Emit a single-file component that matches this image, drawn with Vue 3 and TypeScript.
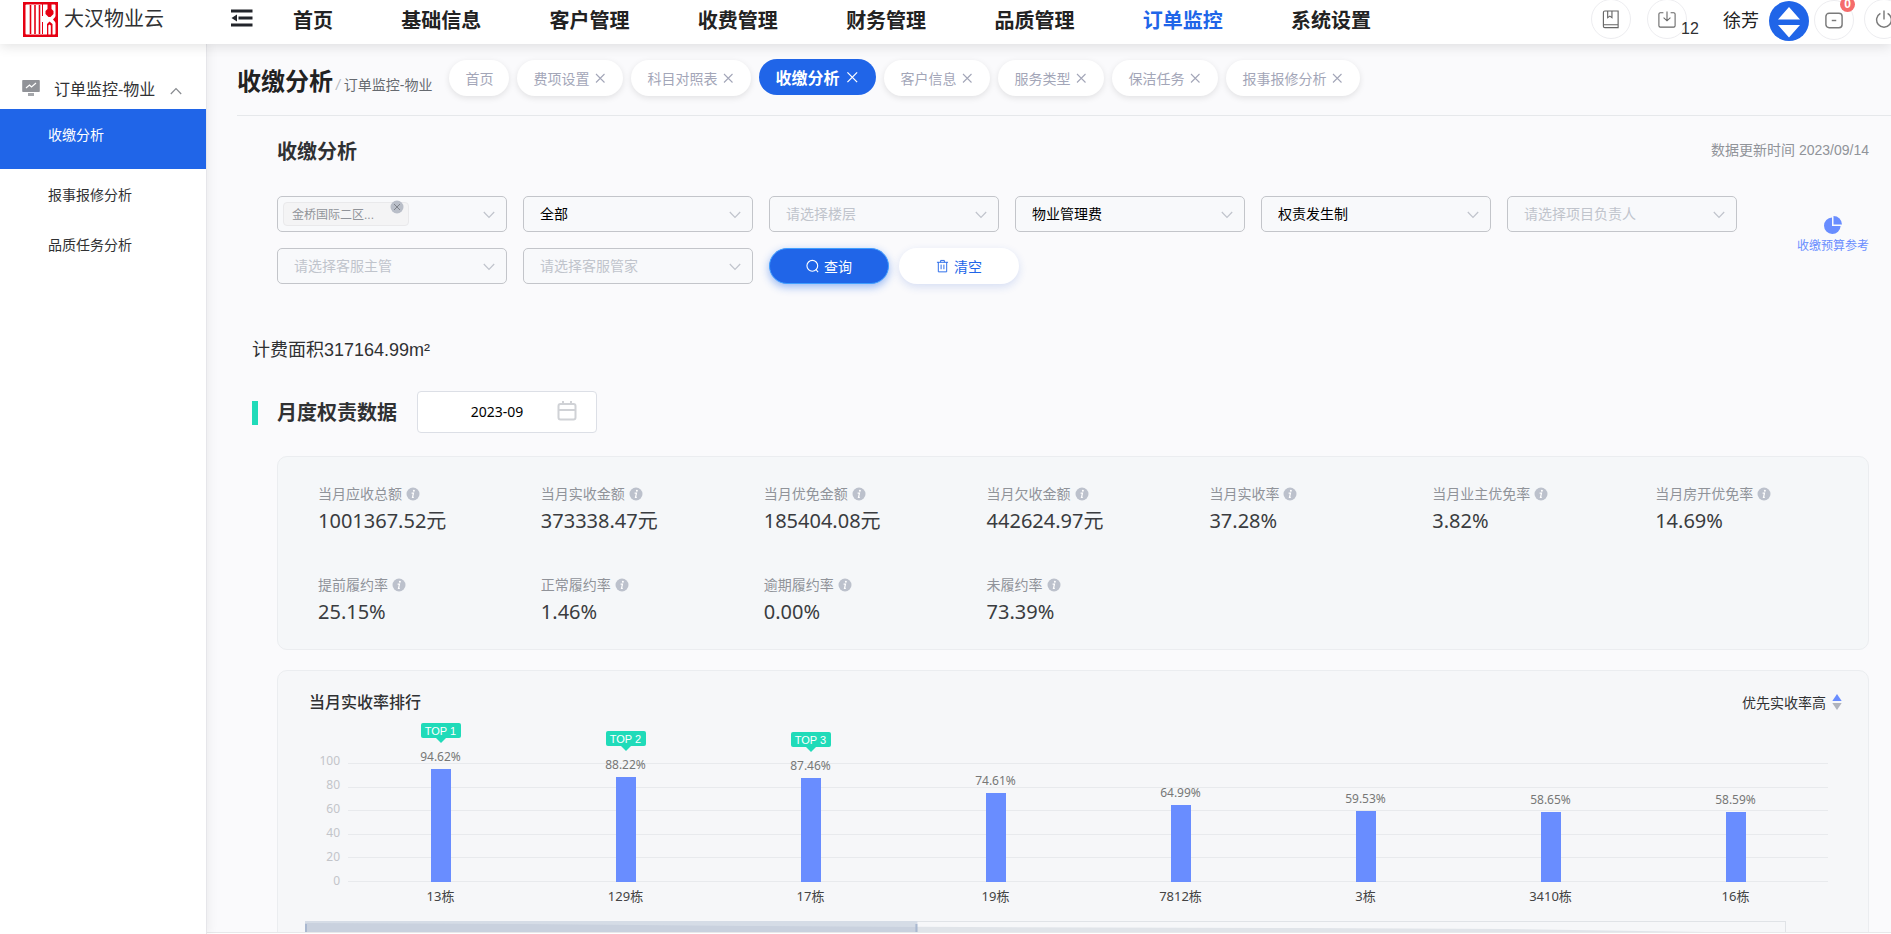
<script setup lang="ts">
import { ref } from 'vue'

interface Tab { label: string; closable: boolean; active?: boolean }
interface Filter { id: string; name: string; value: string; placeholder: boolean }
interface Stat { label: string; value: string }
interface Bar { name: string; rate: number }

const navItems = ['首页', '基础信息', '客户管理', '收费管理', '财务管理', '品质管理', '订单监控', '系统设置']
const activeNav = ref('订单监控')

const menuItems = ['收缴分析', '报事报修分析', '品质任务分析']
const activeMenu = ref('收缴分析')

const tabs: Tab[] = [
  { label: '首页', closable: false },
  { label: '费项设置', closable: true },
  { label: '科目对照表', closable: true },
  { label: '收缴分析', closable: true, active: true },
  { label: '客户信息', closable: true },
  { label: '服务类型', closable: true },
  { label: '保洁任务', closable: true },
  { label: '报事报修分析', closable: true },
]

const filters: Filter[] = [
  { id: 'scope', name: '范围', value: '全部', placeholder: false },
  { id: 'floor', name: '楼层', value: '请选择楼层', placeholder: true },
  { id: 'fee', name: '费项', value: '物业管理费', placeholder: false },
  { id: 'basis', name: '核算方式', value: '权责发生制', placeholder: false },
  { id: 'owner', name: '项目负责人', value: '请选择项目负责人', placeholder: true },
  { id: 'supervisor', name: '客服主管', value: '请选择客服主管', placeholder: true },
  { id: 'keeper', name: '客服管家', value: '请选择客服管家', placeholder: true },
]

const month = ref('2023-09')

const stats: Stat[] = [
  { label: '当月应收总额', value: '1001367.52元' },
  { label: '当月实收金额', value: '373338.47元' },
  { label: '当月优免金额', value: '185404.08元' },
  { label: '当月欠收金额', value: '442624.97元' },
  { label: '当月实收率', value: '37.28%' },
  { label: '当月业主优免率', value: '3.82%' },
  { label: '当月房开优免率', value: '14.69%' },
  { label: '提前履约率', value: '25.15%' },
  { label: '正常履约率', value: '1.46%' },
  { label: '逾期履约率', value: '0.00%' },
  { label: '未履约率', value: '73.39%' },
]

const ticks = [100, 80, 60, 40, 20, 0]
const bars: Bar[] = [
  { name: '13栋', rate: 94.62 },
  { name: '129栋', rate: 88.22 },
  { name: '17栋', rate: 87.46 },
  { name: '19栋', rate: 74.61 },
  { name: '7812栋', rate: 64.99 },
  { name: '3栋', rate: 59.53 },
  { name: '3410栋', rate: 58.65 },
  { name: '16栋', rate: 58.59 },
]
</script>

<template>
  <div class="app">
    <header class="topbar">
      <div class="brand">
        <svg class="logo" viewBox="0 0 35 35" aria-hidden="true">
          <rect width="35" height="35" fill="#e60012" />
          <rect x="2.500" y="2.500" width="30" height="30" rx="1" fill="#fff" />
          <path d="M7.500 3v29M12 3v29M16.500 3v29" stroke="#e60012" stroke-width="1.600" fill="none" />
          <path d="M24.500 2h4v5l2 2v3l-3 3h-2l-3-3V9l2-2z" fill="#e60012" />
          <path d="M19.500 2v12M19.500 20v12" stroke="#e60012" stroke-width="1" fill="none" />
          <path d="M33 14v7l-3-3.500zM24 33V22l2.500-2.500L29.500 22v11h-1.700V23.500l-1.300-1-1.200 1V33z" fill="#e60012" />
        </svg>
        <span class="brand-name">大汉物业云</span>
      </div>
      <button class="fold" type="button" aria-label="收起菜单">
        <svg viewBox="0 0 22 18" aria-hidden="true">
          <path d="M0 2h21.500M7.500 9H21.500M0 16h21.500" stroke="#22252b" stroke-width="3" fill="none" />
          <path d="M0.500 9L6 5.500v7z" fill="#22252b" />
        </svg>
      </button>
      <nav class="nav">
        <a v-for="n in navItems" :key="n" href="#" :class="{ on: n === activeNav }" @click.prevent="activeNav = n">{{ n }}</a>
      </nav>
      <div class="tools">
        <button class="round" type="button" aria-label="手册">
          <svg viewBox="0 0 18 20" fill="none" stroke="#666" stroke-width="1.200" aria-hidden="true">
            <path d="M2.500 1h14v17.500h-14a1.500 1.500 0 0 1-1.500-1.500V2.500A1.500 1.500 0 0 1 2.500 1zM1.200 15.500h15.300M5.500 1v7l2.300-1.600L10 8V1" />
          </svg>
        </button>
        <button class="round download" type="button" aria-label="下载 12">
          <svg viewBox="0 0 20 20" fill="none" stroke="#666" stroke-width="1.200" aria-hidden="true">
            <path d="M6 2.500H2.500A1.500 1.500 0 0 0 1 4v13a1.500 1.500 0 0 0 1.500 1.500h15A1.500 1.500 0 0 0 19 17V4a1.500 1.500 0 0 0-1.500-1.500H14M10 1v10.500M6.200 7.800L10 11.500l3.800-3.700" />
          </svg>
          <span class="count">12</span>
        </button>
        <span class="user">徐芳</span>
        <span class="avatar">
          <svg viewBox="0 0 40 40" aria-hidden="true">
            <path d="M20 6L31 18.500H9zM9 24h22L20 36.500z" fill="#fff" />
          </svg>
        </span>
        <button class="round message" type="button" aria-label="消息 0">
          <svg viewBox="0 0 20 18" fill="none" stroke="#7a7a7a" stroke-width="1.600" aria-hidden="true">
            <rect x="1" y="1" width="18" height="16" rx="3.500" />
            <path d="M7.500 9h5" />
          </svg>
          <span class="dot">0</span>
        </button>
        <button class="round power" type="button" aria-label="退出">
          <svg viewBox="0 0 20 20" fill="none" stroke="#7a7a7a" stroke-width="1.600" aria-hidden="true">
            <path d="M6 3.200a8.200 8.200 0 1 0 8 0M10 0v10" />
          </svg>
        </button>
      </div>
    </header>

    <div class="body">
      <aside class="side">
        <button class="group" type="button" aria-expanded="true">
          <svg class="screen" viewBox="0 0 18 16" aria-hidden="true">
            <path d="M1 0h16a.8.8 0 0 1 .8.8v10.400a.8.8 0 0 1-.8.8H1a.8.8 0 0 1-.8-.8V.8A.8.8 0 0 1 1 0z" fill="#919398" />
            <path d="M4 8l3.500-3 2 2L14 3" stroke="#fff" stroke-width="1.200" fill="none" />
            <rect x="6" y="13" width="6" height="3" fill="#a5a7ab" />
          </svg>
          <span>订单监控-物业</span>
          <svg class="caret" viewBox="0 0 12 8" aria-hidden="true">
            <path d="M.8 7L6 1.500 11.200 7" stroke="#888b90" stroke-width="1.200" fill="none" />
          </svg>
        </button>
        <a v-for="m in menuItems" :key="m" href="#" class="item" :class="{ on: m === activeMenu }" @click.prevent="activeMenu = m">{{ m }}</a>
      </aside>

      <main class="main">
        <div class="crumbs">
          <h1>收缴分析</h1>
          <span class="path"><i>/</i> 订单监控-物业</span>
          <div class="tabs">
            <button v-for="t in tabs" :key="t.label" type="button" class="tab" :class="{ on: t.active }">
              {{ t.label }}
              <svg v-if="t.closable" viewBox="0 0 14 14" aria-hidden="true">
                <path d="M3 3l8.500 8.500M11.500 3l-8.500 8.500" stroke="currentColor" stroke-width="1.100" fill="none" />
              </svg>
            </button>
          </div>
        </div>

        <div class="content">
          <div class="heading">
            <h2>收缴分析</h2>
            <span class="updated">数据更新时间 2023/09/14</span>
          </div>

          <div class="query">
            <form class="filters" @submit.prevent>
              <div class="field">
                <select aria-label="项目"><option></option></select>
                <span class="chip">金桥国际二区...
                  <button type="button" aria-label="移除">
                    <svg viewBox="0 0 14 14" aria-hidden="true">
                      <circle cx="7" cy="7" r="6.500" fill="#b9bec8" />
                      <path d="M4 4l6 6M10 4l-6 6" stroke="#7f838b" stroke-width="1" />
                    </svg>
                  </button>
                </span>
                <svg class="down" viewBox="0 0 12 8" aria-hidden="true"><path d="M.8 1L6 6.500 11.200 1" /></svg>
              </div>
              <div v-for="f in filters" :key="f.id" class="field">
                <select :id="f.id" :aria-label="f.name" :class="{ empty: f.placeholder }">
                  <option>{{ f.value }}</option>
                </select>
                <svg class="down" viewBox="0 0 12 8" aria-hidden="true"><path d="M.8 1L6 6.500 11.200 1" /></svg>
              </div>
              <div class="actions">
                <button class="btn primary" type="submit">
                  <svg viewBox="0 0 14 14" fill="none" stroke="currentColor" stroke-width="1.200" aria-hidden="true">
                    <circle cx="6.800" cy="6.800" r="5.800" /><path d="M10.500 10.500l2.500 3" />
                  </svg>
                  查询
                </button>
                <button class="btn" type="reset">
                  <svg viewBox="0 0 14 14" fill="none" stroke="currentColor" stroke-width="1" aria-hidden="true">
                    <path d="M1 3h12M5 3V1h4v2M2.500 3v10.300h9V3M5.500 5.500v5M8.500 5.500v5" />
                  </svg>
                  清空
                </button>
              </div>
            </form>
            <a class="budget" href="#">
              <svg viewBox="0 0 18 18" aria-hidden="true">
                <path d="M8 1.400V10h8.600A8.300 8.300 0 1 1 8 1.400z" fill="#698dff" />
                <path d="M9.500 0A8.500 8.500 0 0 1 18 8.500H9.500z" fill="#698dff" />
              </svg>
              收缴预算参考
            </a>
          </div>

          <p class="area">计费面积317164.99m²</p>

          <div class="period">
            <h2>月度权责数据</h2>
            <div class="date">
              <input v-model="month" type="text" aria-label="月份" />
              <svg viewBox="0 0 20 20" fill="none" stroke="#d0d2d6" stroke-width="2" aria-hidden="true">
                <rect x="1.500" y="3" width="17" height="15.500" rx="2" /><path d="M1.500 9h17M6 0v4M14 0v4" />
              </svg>
            </div>
          </div>

          <section class="card stats">
            <div v-for="s in stats" :key="s.label" class="stat">
              <div class="stat-label">
                {{ s.label }}
                <svg viewBox="0 0 14 14" aria-hidden="true">
                  <circle cx="7" cy="7" r="6.500" fill="#bcc1cc" />
                  <circle cx="7.900" cy="3.700" r="1" fill="#fff" />
                  <path d="M5.600 6.200h1.900L6.500 10.400h1.300" stroke="#fff" stroke-width="1.200" fill="none" />
                </svg>
              </div>
              <div class="stat-value">{{ s.value }}</div>
            </div>
          </section>

          <section class="card rank">
            <div class="rank-head">
              <h3>当月实收率排行</h3>
              <button class="sort" type="button">
                优先实收率高
                <svg viewBox="0 0 10 16" aria-hidden="true">
                  <path d="M5 0l4.700 7H.3z" fill="#698dff" /><path d="M.3 9h9.400L5 16z" fill="#b0b4bd" />
                </svg>
              </button>
            </div>
            <div class="chart">
              <div class="axis"><span v-for="t in ticks" :key="t">{{ t }}</span></div>
              <div class="plot">
                <div class="lines"><i v-for="t in ticks" :key="t"></i></div>
                <div class="cols">
                  <div v-for="(b, i) in bars" :key="b.name" class="col">
                    <span v-if="i < 3" class="top">TOP {{ i + 1 }}</span>
                    <span class="rate">{{ b.rate.toFixed(2) }}%</span>
                    <div class="bar" :style="{ height: b.rate + '%' }"></div>
                  </div>
                </div>
              </div>
              <div class="names"><span v-for="b in bars" :key="b.name">{{ b.name }}</span></div>
            </div>
            <svg class="zoom" viewBox="0 0 1480 30" preserveAspectRatio="none" aria-hidden="true">
              <rect x="0.500" y="0.500" width="1479" height="29" fill="#f6f7f9" stroke="#e0e3e7" />
              <path d="M0 2L220 3 440 5 660 6 1000 7 1200 8 1400 11V30H0z" fill="#e0e4e9" />
              <rect width="612" height="30" fill="#d5dce6" />
              <path d="M0 2L220 3 440 5 612 6V30H0z" fill="#c9d1de" />
              <path d="M1 3v30M611 3v30" stroke="#a9b8d0" stroke-width="2" />
            </svg>
          </section>
        </div>
      </main>
    </div>
  </div>
</template>

<style>
html,
body,
#app {
  height: 100%;
}
body {
  margin: 0;
  overflow: hidden;
}
</style>

<style scoped>
.app {
  display: flex;
  flex-direction: column;
  height: 100%;
  overflow: hidden;
  background: #fff;
  color: #303133;
  font-family: "Liberation Sans", "Noto Sans CJK SC", sans-serif;
  font-size: 14px;
}
.app * {
  box-sizing: border-box;
}
button,
select,
input {
  margin: 0;
  padding: 0;
  border: 0;
  background: none;
  color: inherit;
  font: inherit;
}
button {
  cursor: pointer;
}
a {
  color: inherit;
  text-decoration: none;
}
h1,
h2,
h3,
p {
  margin: 0;
}
svg {
  display: block;
  flex: none;
}

/* top bar */
.topbar {
  position: relative;
  z-index: 2;
  display: flex;
  align-items: flex-start;
  flex: none;
  height: 44px;
  padding-left: 23px;
  background: #fff;
  box-shadow: 0 2px 12px rgba(0, 0, 0, 0.12);
}
.brand {
  display: flex;
  gap: 6px;
  width: 208px;
  padding-top: 2px;
}
.logo {
  width: 35px;
  height: 35px;
}
.brand-name {
  font-size: 20px;
  line-height: 34px;
}
.fold {
  padding-top: 9px;
}
.fold svg {
  width: 22px;
  height: 18px;
}
.nav {
  display: flex;
  flex: 1;
  justify-content: space-between;
  margin: 0 220px 0 40px;
  color: #222;
  font-size: 20px;
  font-weight: 700;
  line-height: 42px;
  white-space: nowrap;
}
.nav .on {
  color: #2065e8;
}
.tools {
  display: flex;
  align-items: flex-start;
  flex: none;
  margin-right: -13px;
}
.round {
  position: relative;
  display: flex;
  align-items: center;
  justify-content: center;
  width: 40px;
  height: 40px;
  margin: -1px 16px 0 0;
  border: 1px solid #ededf0;
  border-radius: 50%;
}
.round svg {
  width: 18px;
  height: 19px;
}
.count {
  position: absolute;
  top: 19px;
  left: 33px;
  font-size: 16px;
  line-height: 20px;
}
.user {
  margin: 0 10px 0 20px;
  color: #222;
  font-size: 18px;
  line-height: 42px;
}
.avatar {
  width: 40px;
  height: 40px;
  margin: 1px 5px 0 0;
  border-radius: 50%;
  background: #2065e8;
}
.message {
  margin: 0 10px 0 0;
}
.power {
  margin-right: 0;
}
.dot {
  position: absolute;
  top: -4px;
  left: 25px;
  width: 15px;
  border-radius: 8px;
  background: #f56c6c;
  color: #fff;
  font-size: 12px;
  font-weight: 700;
  line-height: 15px;
}

/* side menu */
.body {
  display: flex;
  flex: 1;
  min-height: 0;
}
.side {
  position: relative;
  z-index: 1;
  flex: none;
  width: 207px;
  border-right: 1px solid #e6e6ea;
  background: #fff;
  box-shadow: 2px 0 10px rgba(0, 0, 0, 0.06);
}
.group {
  display: flex;
  align-items: center;
  width: 100%;
  height: 65px;
  padding: 22px 24px 0 22px;
  font-size: 16px;
}
.screen {
  width: 18px;
  height: 16px;
  margin-right: 14px;
}
.caret {
  width: 12px;
  height: 8px;
  margin: 6px 0 0 auto;
}
.item {
  display: block;
  height: 50px;
  padding-left: 48px;
  line-height: 52px;
}
.item.on {
  height: 60px;
  background: #2065e8;
  color: #fff;
}

/* page header */
.main {
  display: flex;
  flex-direction: column;
  flex: 1;
  min-width: 0;
  margin-bottom: 1px;
  overflow: hidden;
  border-bottom: 1px solid #e8e8ea;
  background: #fafafc;
}
.crumbs {
  display: flex;
  align-items: center;
  flex: none;
  height: 72px;
  margin-left: 30px;
  padding-top: 4px;
  border-bottom: 1px solid #e6e8eb;
  white-space: nowrap;
}
h1 {
  color: #222;
  font-size: 24px;
  line-height: 36px;
}
.path {
  margin: 4px 17px 0 3px;
  color: #666a70;
}
.path i {
  color: #b5b8be;
}
.tabs {
  display: flex;
  align-items: flex-start;
  gap: 8px;
  padding-bottom: 8px;
}
.tab {
  display: flex;
  align-items: center;
  gap: 4px;
  height: 36px;
  margin-top: 1px;
  padding: 0 16px 1px;
  border-radius: 18px;
  background: #fff;
  box-shadow: 0 2px 6px rgba(0, 0, 0, 0.1);
  color: #a3a6b8;
}
.tab svg {
  width: 14px;
  height: 14px;
}
.tab.on {
  gap: 5px;
  margin-top: 0;
  background: #2065e8;
  box-shadow: none;
  color: #fff;
  font-size: 16px;
  font-weight: 700;
}
.tab.on svg {
  width: 16px;
  height: 16px;
}

/* content */
.content {
  flex: none;
  padding: 20px 22px 0 45px;
}
.heading {
  display: flex;
  align-items: flex-start;
  justify-content: space-between;
  height: 30px;
  margin-left: 25px;
}
h2 {
  font-size: 20px;
  line-height: 32px;
}
.updated {
  color: #909399;
  line-height: 28px;
}
.query {
  display: flex;
  gap: 60px;
  margin: 30px 0 52px 25px;
}
.filters {
  display: grid;
  flex: 1;
  grid-template-columns: repeat(6, 1fr);
  gap: 16px;
}
.field {
  position: relative;
}
.field select {
  width: 100%;
  height: 36px;
  padding: 0 32px 0 16px;
  appearance: none;
  border: 1px solid #c3c5ca;
  border-radius: 5px;
  background: #f8f9fb;
  color: #000;
}
.field select.empty {
  color: #c0c4cc;
}
.down {
  position: absolute;
  top: 15px;
  right: 12px;
  width: 12px;
  height: 8px;
  fill: none;
  pointer-events: none;
  stroke: #c0c4cc;
  stroke-width: 1.2px;
}
.chip {
  position: absolute;
  top: 6px;
  left: 6px;
  width: 126px;
  height: 24px;
  padding-left: 8px;
  border: 1px solid #e9e9eb;
  border-radius: 4px;
  background: #f4f4f5;
  color: #909399;
  font-size: 12px;
  line-height: 24px;
}
.chip button {
  position: absolute;
  top: -3px;
  right: 4px;
}
.chip svg {
  width: 14px;
  height: 14px;
}
.actions {
  display: flex;
  grid-column: span 2;
  gap: 10px;
}
.btn {
  display: flex;
  align-items: center;
  justify-content: center;
  gap: 5px;
  width: 120px;
  height: 36px;
  border-radius: 18px;
  background: #fff;
  box-shadow: 0 3px 8px rgba(32, 80, 200, 0.16);
  color: #2065e8;
}
.btn svg {
  width: 13px;
  height: 14px;
}
.btn.primary {
  border: 1px solid #409eff;
  background: #2065e8;
  box-shadow: 0 3px 8px rgba(32, 101, 232, 0.45);
  color: #fff;
}
.budget {
  display: flex;
  align-items: center;
  flex: none;
  flex-direction: column;
  gap: 2px;
  padding-top: 20px;
  color: #698dff;
  font-size: 12px;
  line-height: 20px;
}
.budget svg {
  width: 18px;
  height: 18px;
}
.area {
  font-size: 18px;
  line-height: 28px;
}
.period {
  display: flex;
  align-items: center;
  gap: 20px;
  margin: 27px 0 23px;
}
.period h2 {
  display: flex;
  align-items: center;
  gap: 19px;
  padding-top: 2px;
}
.period h2::before {
  width: 6px;
  height: 24px;
  background: #20dbb9;
  content: "";
}
.date {
  position: relative;
}
.date input {
  width: 180px;
  height: 42px;
  padding: 0 20px 2px 0;
  border: 1px solid #dcdfe6;
  border-radius: 4px;
  background: #fff;
  color: #000;
  font-family: "Noto Sans", "Noto Sans CJK SC", sans-serif;
  text-align: center;
}
.date svg {
  position: absolute;
  top: 10px;
  right: 20px;
  width: 20px;
  height: 20px;
}

/* cards */
.card {
  margin: 0 0 20px 25px;
  border: 1px solid #ebedf0;
  border-radius: 10px;
  background: #f5f7f9;
  font-family: "Noto Sans", "Noto Sans CJK SC", sans-serif;
}
.stats {
  display: grid;
  grid-template-columns: repeat(7, 1fr);
  row-gap: 40px;
  padding: 27px 0 23px 30px;
}
.stat {
  padding-left: 10px;
}
.stat-label {
  display: flex;
  align-items: center;
  gap: 4px;
  margin-bottom: 3px;
  color: #909399;
  line-height: 20px;
}
.stat-label svg {
  width: 14px;
  height: 14px;
}
.stat-value {
  color: #3a3c40;
  font-size: 20px;
  line-height: 28px;
}
.rank {
  padding: 19px 26px 0 31px;
  background: #f6f7f9;
}
.rank-head {
  display: flex;
  align-items: center;
  justify-content: space-between;
}
h3 {
  font-size: 16px;
  font-weight: 500;
  line-height: 24px;
}
.sort {
  display: flex;
  align-items: center;
  gap: 6px;
}
.sort svg {
  width: 10px;
  height: 16px;
}
.chart {
  display: grid;
  grid-template-columns: 31px 1fr;
  column-gap: 8px;
  margin: 49px 14px 0 0;
  font-size: 12px;
}
.axis {
  display: flex;
  flex-direction: column;
  justify-content: space-between;
  margin: -11px 0 -8px;
  color: #c3c5ca;
  line-height: 18px;
  text-align: right;
}
.plot {
  display: grid;
  height: 119px;
}
.lines,
.cols {
  grid-area: 1 / 1;
}
.lines {
  display: flex;
  flex-direction: column;
  justify-content: space-between;
}
.lines i {
  height: 1px;
  background: #e8eaed;
}
.cols {
  display: flex;
  height: 119px;
}
.col {
  display: flex;
  align-items: center;
  flex: 1;
  flex-direction: column;
  justify-content: flex-end;
}
.col > * {
  flex: none;
}
.bar {
  width: 20px;
  background: #698dff;
}
.rate {
  margin-bottom: 3px;
  color: #777;
  line-height: 18px;
}
.top {
  display: flex;
  align-items: center;
  flex-direction: column;
  width: 40px;
  height: 15px;
  margin-bottom: 10px;
  border-radius: 2px;
  background: #20dbb9;
  color: #fff;
  font-family: "Liberation Sans", sans-serif;
  font-size: 11px;
  line-height: 16px;
}
.top::after {
  border: 5px solid transparent;
  border-top-color: #20dbb9;
  border-bottom: 0;
  margin-top: -1px;
  content: "";
}
.names {
  display: flex;
  grid-column: 2;
  margin-top: 4px;
  color: #444;
  font-size: 13px;
  line-height: 20px;
}
.names span {
  flex: 1;
  text-align: center;
}
.zoom {
  width: calc(100% - 52px);
  height: 30px;
  margin: 15px 0 0 -4px;
}
</style>
